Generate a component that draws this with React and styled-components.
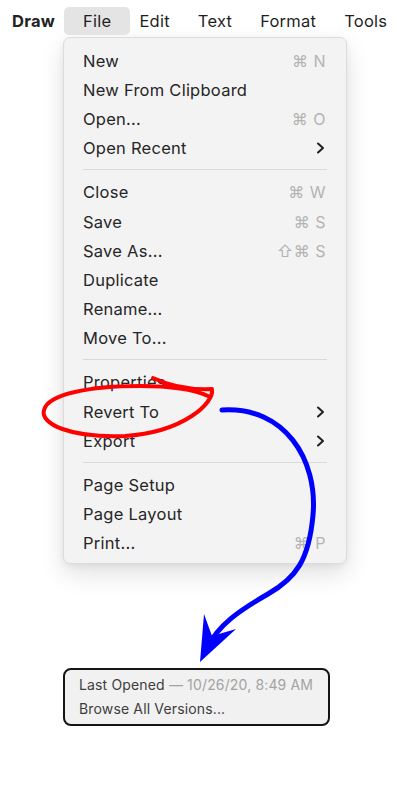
import React from 'react';
import styled, { createGlobalStyle } from 'styled-components';

const GlobalStyle = createGlobalStyle`
  html, body {
    margin: 0;
    padding: 0;
    background: #ffffff;
  }
  body {
    font-family: Inter, "Liberation Sans", Arial, sans-serif;
    -webkit-font-smoothing: antialiased;
  }
`;

const Page = styled.div`
  position: relative;
  width: 400px;
  height: 800px;
  overflow: hidden;
  background: #fff;
`;

const MenuBar = styled.div`
  display: flex;
  align-items: center;
  padding: 7px 0 0 12px;
  height: 28px;
`;

const BarItem = styled.div`
  height: 28px;
  line-height: 28px;
  font-size: 16.5px;
  letter-spacing: 0.25px;
  color: #1f1f1f;
  padding: ${p => (p.$active ? '0 19px' : '0 14px')};
  margin: ${p => (p.$active ? '0 -5px' : '0')};
  border-radius: 5px;
  background: ${p => (p.$active ? '#e4e4e4' : 'transparent')};

  &:first-child {
    padding-left: 0;
    font-weight: 700;
    color: #222;
  }
`;

const Menu = styled.div`
  margin: 2px 0 0 63px;
  width: 284px;
  box-sizing: border-box;
  padding: 8px 0 4.5px;
  background: #f3f3f3;
  border: 1px solid #dcdcdc;
  border-radius: 7px;
  box-shadow: 0 10px 24px rgba(0, 0, 0, 0.12), 0 2px 6px rgba(0, 0, 0, 0.06);
`;

const Row = styled.div`
  display: flex;
  align-items: center;
  justify-content: space-between;
  height: 29.2px;
  padding: 0 20px 0 19px;
  font-size: 16.5px;
  letter-spacing: 0.25px;
  color: #262626;
`;

const Shortcut = styled.span`
  color: #b3b3b3;
  font-size: 16px;
  letter-spacing: 0.5px;
`;

const Chevron = styled.svg`
  width: 9px;
  height: 12px;
  margin-right: 1px;
`;

const Separator = styled.div`
  height: 1px;
  margin: 6.5px 19px 7.5px 19px;
  background: #d9d9d9;
`;

const Versions = styled.div`
  margin: 104px 0 0 63px;
  width: 267px;
  box-sizing: border-box;
  padding: 3.5px 8px 3.5px 14px;
  background: #f1f1f1;
  border: 2px solid #141414;
  border-radius: 8px;
`;

const VersionLine = styled.div`
  font-size: 14px;
  letter-spacing: 0.15px;
  line-height: 23.5px;
  white-space: nowrap;
  color: #3d3d3d;
`;

const Muted = styled.span`
  color: #a3a3a3;
`;

const Annotation = styled.svg`
  position: absolute;
  top: 0;
  left: 0;
  width: 400px;
  height: 800px;
  pointer-events: none;
`;

const sections = [
  [
    { label: 'New', key: '⌘ N' },
    { label: 'New From Clipboard' },
    { label: 'Open...', key: '⌘ O' },
    { label: 'Open Recent', sub: true },
  ],
  [
    { label: 'Close', key: '⌘ W' },
    { label: 'Save', key: '⌘ S' },
    { label: 'Save As...', key: '⇧⌘ S' },
    { label: 'Duplicate' },
    { label: 'Rename...' },
    { label: 'Move To...' },
  ],
  [
    { label: 'Properties' },
    { label: 'Revert To', sub: true },
    { label: 'Export', sub: true },
  ],
  [
    { label: 'Page Setup' },
    { label: 'Page Layout' },
    { label: 'Print...', key: '⌘ P' },
  ],
];

const MenuRow = ({ item }) => (
  <Row>
    <span>{item.label}</span>
    {item.key && <Shortcut>{item.key}</Shortcut>}
    {item.sub && (
      <Chevron viewBox="0 0 9 12">
        <polyline points="2,1.5 7,6 2,10.5" fill="none" stroke="#1f1f1f" strokeWidth="2" strokeLinecap="round" strokeLinejoin="round" />
      </Chevron>
    )}
  </Row>
);

export default function App() {
  return (
    <Page>
      <GlobalStyle />
      <MenuBar>
        <BarItem>Draw</BarItem>
        <BarItem $active>File</BarItem>
        <BarItem>Edit</BarItem>
        <BarItem>Text</BarItem>
        <BarItem>Format</BarItem>
        <BarItem>Tools</BarItem>
      </MenuBar>

      <Menu>
        {sections.map((section, i) => (
          <React.Fragment key={i}>
            {i > 0 && <Separator />}
            {section.map(item => (
              <MenuRow key={item.label} item={item} />
            ))}
          </React.Fragment>
        ))}
      </Menu>

      <Versions>
        <VersionLine>
          Last Opened <Muted>— 10/26/20, 8:49 AM</Muted>
        </VersionLine>
        <VersionLine>Browse All Versions...</VersionLine>
      </Versions>

      {/* hand-drawn markup over the menu */}
      <Annotation viewBox="0 0 400 800">
        <path
          d="M153,378 C170,386 190,390 212,389 M212,390 C214,402 185,432 125,436 C70,438 40,424 44,410 C48,394 90,386 140,386 C170,386 195,390 208,396"
          fill="none"
          stroke="#ff0000"
          strokeWidth="4"
          strokeLinecap="round"
        />
        <path
          d="M222,410 C285,406 318,460 313,515 C309,560 296,578 268,594 C240,610 218,625 207,648"
          fill="none"
          stroke="#0000ff"
          strokeWidth="5"
          strokeLinecap="round"
        />
        <path d="M200,662 L204,614 L212,636 L236,629 Z" fill="#0000ff" />
      </Annotation>
    </Page>
  );
}
